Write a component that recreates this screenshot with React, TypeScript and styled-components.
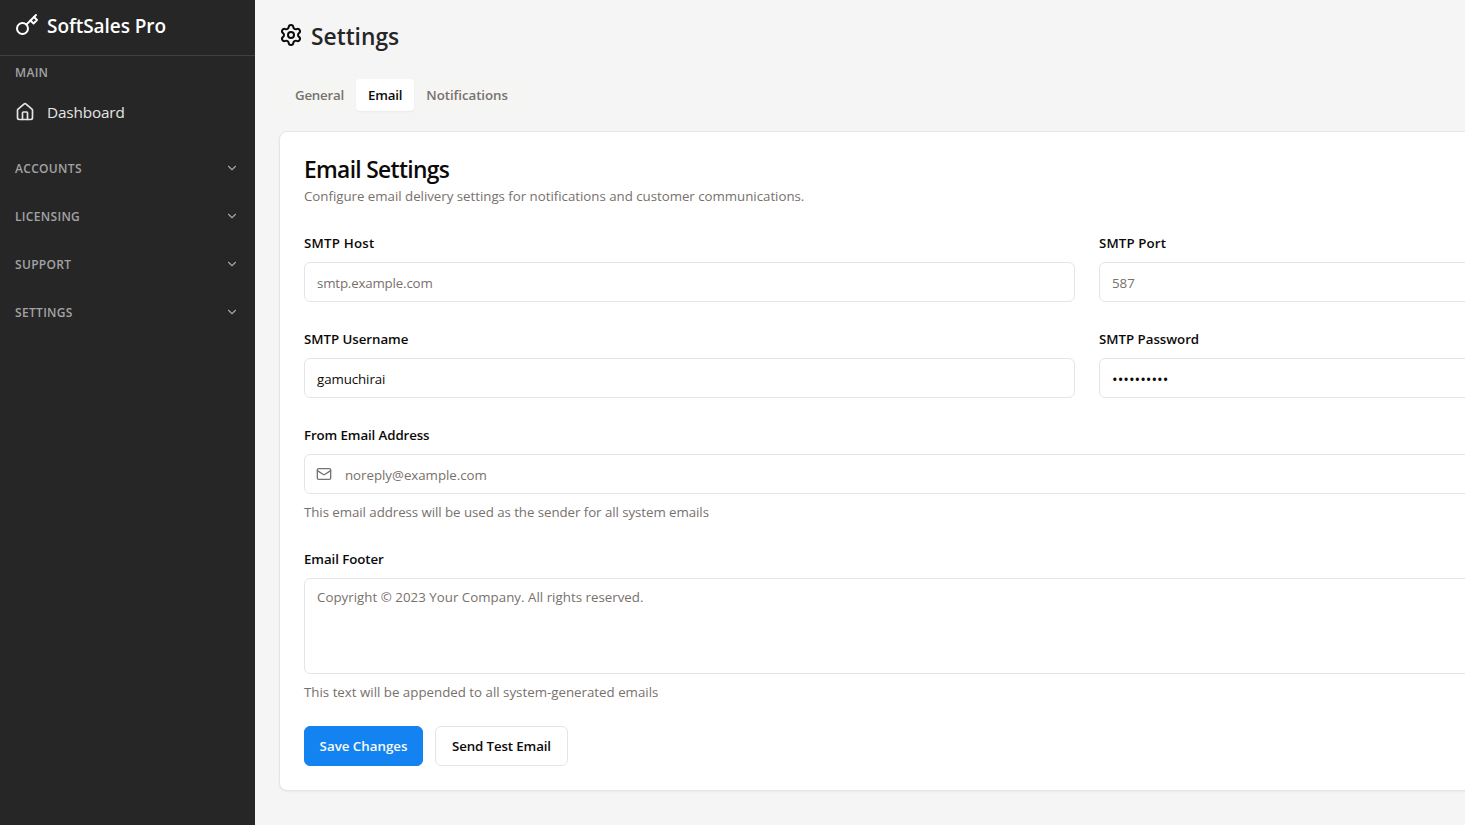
import React from "react";
import styled, { createGlobalStyle } from "styled-components";
import { ChevronDown, House, Mail, Settings } from "lucide-react";

const GlobalStyle = createGlobalStyle`
  *, *::before, *::after { box-sizing: border-box; }
  html, body, #root { height: 100%; }
  body {
    margin: 0;
    overflow: hidden;
    background: #f5f5f5;
    color: #0c0a09;
    font-family: "Open Sans", "Noto Sans", sans-serif;
    font-size: 13.3px;
  }
  h1, h2, p { margin: 0; }
  button, input, textarea { font: inherit; }
`;

const Shell = styled.div`
  display: flex;
  height: 825px;
  overflow: hidden;
`;

const Sidebar = styled.aside`
  flex: 0 0 255px;
  background: #262626;
  color: #fff;
`;

const Brand = styled.div`
  display: flex;
  align-items: center;
  gap: 8px;
  height: 56px;
  padding: 0 15px 4px;
  border-bottom: 1px solid #404040;
  svg { margin-top: -2px; }
`;

const BrandName = styled.span`
  font-size: 19px;
  font-weight: 600;
  line-height: 28px;
  letter-spacing: -0.06px;
`;

const GroupHeader = styled.div`
  display: flex;
  align-items: center;
  justify-content: space-between;
  height: 32px;
  padding: 0 15px;
  color: #a3a3a3;
  font-size: 12px;
  font-weight: 600;
  letter-spacing: 0.32px;
  svg { margin-right: 1px; }
`;

const NavLink = styled.a`
  display: flex;
  align-items: center;
  gap: 12px;
  height: 40px;
  margin: 4px 0 20px;
  padding: 0 15px;
  color: #e5e5e5;
  font-size: 15.3px;
  letter-spacing: -0.15px;
`;

const Groups = styled.div`
  display: flex;
  flex-direction: column;
  gap: 16px;
`;

const Main = styled.main`
  flex: 0 0 1640px;
  padding: 22px 24px 0;
`;

const PageTitle = styled.h1`
  display: flex;
  align-items: center;
  gap: 8px;
  height: 28px;
  color: #262626;
  font-size: 22.8px;
  font-weight: 600;
  letter-spacing: -0.02px;
  svg { color: #0c0a09; margin-top: -2px; }
`;

const TabList = styled.div`
  display: inline-flex;
  align-items: center;
  height: 40px;
  margin-top: 25px;
  padding: 4px;
  border-radius: 6px;
  background: #f5f5f4;
`;

const Tab = styled.button<{ $active?: boolean; $spacing: number }>`
  height: 32px;
  padding: 0 12px;
  border: 0;
  border-radius: 4px;
  background: ${(p) => (p.$active ? "#fff" : "transparent")};
  color: ${(p) => (p.$active ? "#0c0a09" : "#78716c")};
  box-shadow: ${(p) => (p.$active ? "0 1px 2px rgba(0,0,0,.05)" : "none")};
  font-weight: 600;
  letter-spacing: ${(p) => p.$spacing}px;
`;

const Card = styled.section`
  margin-top: 16px;
  height: 660px;
  padding: 24px;
  border: 1px solid #e5e5e5;
  border-radius: 8px;
  background: #fff;
  box-shadow: 0 1px 2px rgba(0, 0, 0, 0.05);
`;

const CardTitle = styled.h2`
  font-size: 22.8px;
  font-weight: 600;
  line-height: 28px;
  letter-spacing: -0.68px;
`;

const Muted = styled.p<{ $spacing?: number }>`
  color: #78716c;
  line-height: 20px;
  letter-spacing: ${(p) => p.$spacing ?? 0}px;
`;

const CardHeader = styled.header`
  display: flex;
  flex-direction: column;
  gap: 2px;
`;

const Fields = styled.div`
  display: grid;
  grid-template-columns: 771px 771px;
  gap: 24px;
  margin-top: 24px;
`;

const Field = styled.div<{ $wide?: boolean }>`
  display: flex;
  flex-direction: column;
  gap: 8px;
  grid-column: ${(p) => (p.$wide ? "1 / -1" : "auto")};
`;

const Label = styled.label<{ $spacing?: number }>`
  padding: 4px 0 2px;
  line-height: 18px;
  height: 24px;
  font-weight: 600;
  letter-spacing: ${(p) => p.$spacing ?? 0}px;
`;

const InputBox = styled.div`
  display: flex;
  align-items: center;
  gap: 13px;
  height: 40px;
  padding: 0 12px;
  border: 1px solid #e5e5e5;
  border-radius: 6px;
  color: #737373;
  svg { margin: 0 0 0 -1px; }
`;

const Input = styled.input<{ $spacing?: number }>`
  flex: 1;
  height: 38px;
  padding: 2px 0 0;
  border: 0;
  outline: 0;
  background: transparent;
  color: #0c0a09;
  letter-spacing: ${(p) => p.$spacing ?? 0}px;
  &[type="password"] { font-size: 15px; }
  &::placeholder { color: #78716c; opacity: 1; }
`;

const Textarea = styled.textarea`
  height: 96px;
  padding: 8px 12px;
  border: 1px solid #e5e5e5;
  border-radius: 6px;
  resize: none;
  line-height: 20px;
  letter-spacing: 0.02px;
  &::placeholder { color: #78716c; opacity: 1; }
`;

const Actions = styled.div`
  display: flex;
  gap: 12px;
  margin-top: 24px;
`;

const Button = styled.button<{ $primary?: boolean }>`
  width: ${(p) => (p.$primary ? 119 : 133)}px;
  height: 40px;
  padding: 0;
  border: 1px solid ${(p) => (p.$primary ? "#1283f0" : "#e5e5e5")};
  border-radius: 6px;
  background: ${(p) => (p.$primary ? "#1283f0" : "#fff")};
  color: ${(p) => (p.$primary ? "#fafaf9" : "#0c0a09")};
  font-weight: 600;
  letter-spacing: ${(p) => (p.$primary ? 0 : -0.13)}px;
`;

const KeyIcon = () => (
  <svg width="24" height="24" viewBox="0 0 24 24" fill="none" stroke="currentColor" strokeWidth="2" strokeLinecap="round" strokeLinejoin="round">
    <circle cx="7.5" cy="15.5" r="5.5" />
    <path d="m21 2-9.6 9.6" />
    <path d="m15.5 7.5 3 3L22 7l-3-3" />
  </svg>
);

const groups = ["ACCOUNTS", "LICENSING", "SUPPORT", "SETTINGS"];

export default function App() {
  return (
    <>
      <GlobalStyle />
      <Shell>
        <Sidebar>
          <Brand>
            <KeyIcon />
            <BrandName>SoftSales Pro</BrandName>
          </Brand>
          <GroupHeader>MAIN</GroupHeader>
          <NavLink>
            <House size={20} />
            <span>Dashboard</span>
          </NavLink>
          <Groups>
            {groups.map((g) => (
              <GroupHeader key={g}>
                <span>{g}</span>
                <ChevronDown size={14} />
              </GroupHeader>
            ))}
          </Groups>
        </Sidebar>
        <Main>
          <PageTitle>
            <Settings size={24} />
            <span>Settings</span>
          </PageTitle>
          <TabList>
            <Tab $spacing={-0.22}>General</Tab>
            <Tab $active $spacing={-0.2}>Email</Tab>
            <Tab $spacing={-0.06}>Notifications</Tab>
          </TabList>
          <Card>
            <CardHeader>
              <CardTitle>Email Settings</CardTitle>
              <Muted $spacing={-0.025}>Configure email delivery settings for notifications and customer communications.</Muted>
            </CardHeader>
            <Fields>
              <Field>
                <Label $spacing={0.2}>SMTP Host</Label>
                <InputBox><Input $spacing={-0.17} placeholder="smtp.example.com" /></InputBox>
              </Field>
              <Field>
                <Label $spacing={0.12}>SMTP Port</Label>
                <InputBox><Input placeholder="587" /></InputBox>
              </Field>
              <Field>
                <Label $spacing={-0.05}>SMTP Username</Label>
                <InputBox><Input $spacing={-0.08} defaultValue="gamuchirai" /></InputBox>
              </Field>
              <Field>
                <Label $spacing={-0.03}>SMTP Password</Label>
                <InputBox><Input type="password" defaultValue="abcdefghij" /></InputBox>
              </Field>
              <Field $wide>
                <Label $spacing={-0.11}>From Email Address</Label>
                <InputBox>
                  <Mail size={16} />
                  <Input $spacing={-0.03} placeholder="noreply@example.com" />
                </InputBox>
                <Muted $spacing={-0.06}>This email address will be used as the sender for all system emails</Muted>
              </Field>
              <Field $wide>
                <Label $spacing={-0.08}>Email Footer</Label>
                <Textarea placeholder="Copyright © 2023 Your Company. All rights reserved." />
                <Muted>This text will be appended to all system-generated emails</Muted>
              </Field>
            </Fields>
            <Actions>
              <Button $primary>Save Changes</Button>
              <Button>Send Test Email</Button>
            </Actions>
          </Card>
        </Main>
      </Shell>
    </>
  );
}
